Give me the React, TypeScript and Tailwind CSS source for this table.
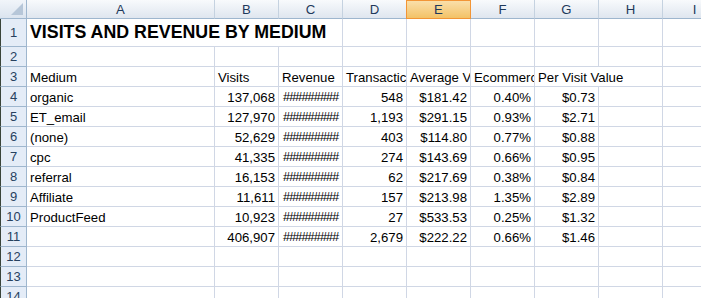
import React from 'react'

const cols = ['A', 'B', 'C', 'D', 'E', 'F', 'G', 'H', 'I']

const rows: (string | null)[][] = [
    ['organic', '137,068', '#########', '548', '$181.42', '0.40%', '$0.73'],
    ['ET_email', '127,970', '#########', '1,193', '$291.15', '0.93%', '$2.71'],
    ['(none)', '52,629', '#########', '403', '$114.80', '0.77%', '$0.88'],
    ['cpc', '41,335', '#########', '274', '$143.69', '0.66%', '$0.95'],
    ['referral', '16,153', '#########', '62', '$217.69', '0.38%', '$0.84'],
    ['Affiliate', '11,611', '#########', '157', '$213.98', '1.35%', '$2.89'],
    ['ProductFeed', '10,923', '#########', '27', '$533.53', '0.25%', '$1.32'],
    ['', '406,907', '#########', '2,679', '$222.22', '0.66%', '$1.46'],
]

const cell =
    'border-r border-b border-[#d0d7e5] bg-white flex items-end overflow-hidden whitespace-nowrap text-black'

function RowHead({ n }: { n: number }) {
    return (
        <div className="border-l border-l-[#3a443a] border-r border-b border-r-[#9eb6ce] border-b-[#9eb6ce] bg-[#e4ecf7] flex items-center justify-center text-[#27415f] text-[13px]">
            {n}
        </div>
    )
}

function Empty() {
    return <div className={cell} />
}

export default function App() {
    return (
        <div
            className="w-[701px] h-[298px] overflow-hidden bg-white"
            style={{ fontFamily: '"Liberation Sans", Arial, sans-serif' }}
        >
            <div className="grid grid-cols-[27px_188px_64px_64px_64px_64px_64px_64px_64px_64px] grid-rows-[19px_28px_repeat(13,20px)] w-[727px] text-[13.2px] leading-[15px]">
                {/* column headers */}
                <div className="relative border-r border-b border-[#9eb6ce] bg-gradient-to-b from-[#f1f5fa] to-[#dbe4ef]">
                    <div className="absolute right-[3px] bottom-[3px] w-0 h-0 border-l-[12px] border-l-transparent border-b-[12px] border-b-[#b6c6d8]" />
                </div>
                {cols.map((c) =>
                    c === 'E' ? (
                        <div
                            key={c}
                            className="border border-[#f29536] -ml-px bg-gradient-to-b from-[#fadfa9] to-[#f3c266] flex items-center justify-center text-[#1e395b]"
                        >
                            {c}
                        </div>
                    ) : (
                        <div
                            key={c}
                            className="border-r border-b border-r-[#c5d2e0] border-b-[#9eb6ce] bg-gradient-to-b from-[#f8fafc] to-[#dfe6ef] flex items-center justify-center text-[#1e395b]"
                        >
                            {c}
                        </div>
                    )
                )}

                {/* row 1 */}
                <RowHead n={1} />
                <div className={`${cell} col-span-3 pl-[3px] pb-[4px]`}>
                    <span className="font-bold text-[17.8px] leading-[20px]">
                        VISITS AND REVENUE BY MEDIUM
                    </span>
                </div>
                {Array.from({ length: 6 }).map((_, i) => (
                    <Empty key={i} />
                ))}

                {/* row 2 */}
                <RowHead n={2} />
                {Array.from({ length: 9 }).map((_, i) => (
                    <Empty key={i} />
                ))}

                {/* row 3 */}
                <RowHead n={3} />
                <div className={`${cell} pl-[3px] pb-px`}>Medium</div>
                <div className={`${cell} pl-[3px] pb-px`}>Visits</div>
                <div className={`${cell} pl-[3px] pb-px`}>Revenue</div>
                <div className={`${cell} pl-[3px] pb-px`}>Transactic</div>
                <div className={`${cell} pl-[3px] pb-px`}>Average V</div>
                <div className={`${cell} pl-[3px] pb-px`}>Ecommerc</div>
                <div className={`${cell} col-span-2 pl-[3px] pb-px`}>Per Visit Value</div>
                <Empty />

                {/* data rows */}
                {rows.map((r, ri) => (
                    <React.Fragment key={ri}>
                        <RowHead n={ri + 4} />
                        <div className={`${cell} pl-[3px] pb-px`}>{r[0]}</div>
                        <div className={`${cell} justify-end pr-[3px] pb-px`}>{r[1]}</div>
                        <div className={`${cell} pl-[4px] pb-px`}>
                            <span className="text-[12.5px] tracking-[-0.8px]">{r[2]}</span>
                        </div>
                        {r.slice(3).map((v, vi) => (
                            <div key={vi} className={`${cell} justify-end pr-[3px] pb-px`}>
                                {v}
                            </div>
                        ))}
                        <Empty />
                        <Empty />
                    </React.Fragment>
                ))}

                {/* empty rows */}
                {[12, 13, 14, 15].map((n) => (
                    <React.Fragment key={n}>
                        <RowHead n={n} />
                        {Array.from({ length: 9 }).map((_, i) => (
                            <Empty key={i} />
                        ))}
                    </React.Fragment>
                ))}
            </div>
        </div>
    )
}
